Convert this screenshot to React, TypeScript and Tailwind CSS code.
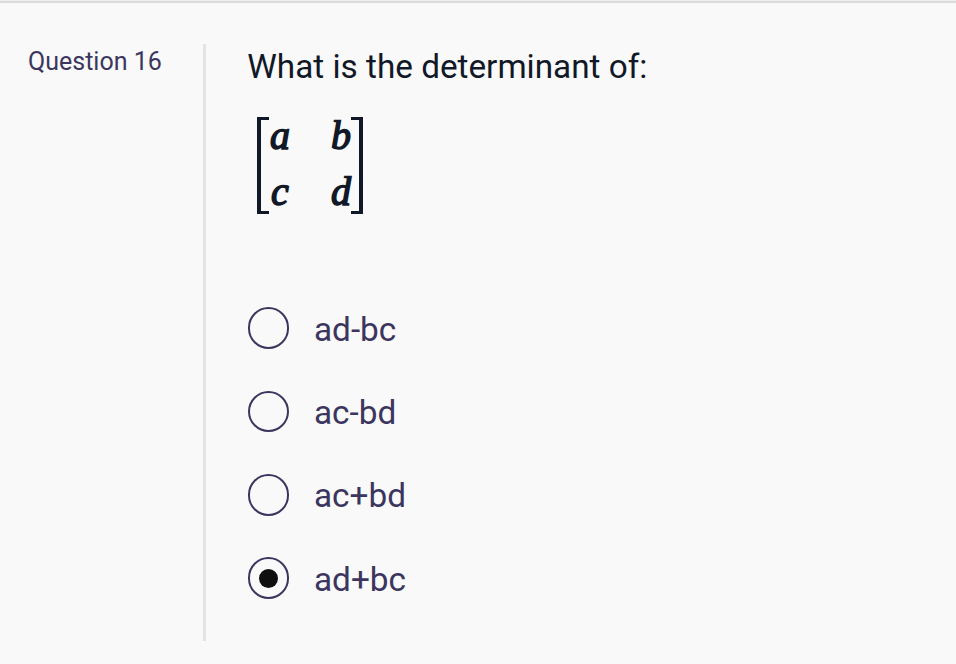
import React, { useState } from 'react';

const OPTIONS = ['ad-bc', 'ac-bd', 'ac+bd', 'ad+bc'];

const Matrix: React.FC = () => (
  <div className="flex h-[97px] w-[106px] text-[#111827]">
    <div className="w-[12px] shrink-0 border-y-[3px] border-l-[4px] border-current" />
    <div className="-ml-1 -mr-[2px] grid flex-1 grid-cols-[30px_1fr_24px] grid-rows-[56px_41px] text-center font-['Liberation_Serif',serif] text-[40px] italic leading-[38px] [-webkit-text-stroke:1.5px_#111827]">
      <span>a</span>
      <span className="col-start-3">b</span>
      <span>c</span>
      <span className="col-start-3">d</span>
    </div>
    <div className="w-[12px] shrink-0 border-y-[3px] border-r-[4px] border-current" />
  </div>
);

const App: React.FC = () => {
  const [selected, setSelected] = useState('ad+bc');

  return (
    <div className="h-screen overflow-hidden border-t border-[#eeeeee] bg-[#f9f9f9] font-[Roboto,sans-serif]">
      <div className="flex border-t-2 border-[#dadada] pt-[41px]">
        <aside className="w-[203px] shrink-0 pl-7 text-[25px] leading-[36px] text-[#3c365e]">Question 16</aside>
        <main className="h-[597px] flex-1 border-l-[3px] border-[#e4e4e4] pl-[41.3px]">
          <h1 className="text-[33.3px] leading-[45px] text-[#111827]">What is the determinant of:</h1>
          <div className="ml-[9.7px] mt-7">
            <Matrix />
          </div>
          <div className="ml-[0.3px] mt-[93.3px] flex flex-col gap-[41.7px]">
            {OPTIONS.map(option => (
              <button key={option} onClick={() => setSelected(option)} className="flex h-[41.7px] items-center gap-[24.7px]">
                <span className="flex size-[41.7px] items-center justify-center rounded-full border-2 border-[#3c365e]">
                  {selected === option && <span className="size-[19.5px] rounded-full bg-[#0f0f0f]" />}
                </span>
                <span className="pt-[3px] text-[33.33px] leading-[40px] text-[#3c365e]">{option}</span>
              </button>
            ))}
          </div>
        </main>
      </div>
    </div>
  );
};

export default App;
